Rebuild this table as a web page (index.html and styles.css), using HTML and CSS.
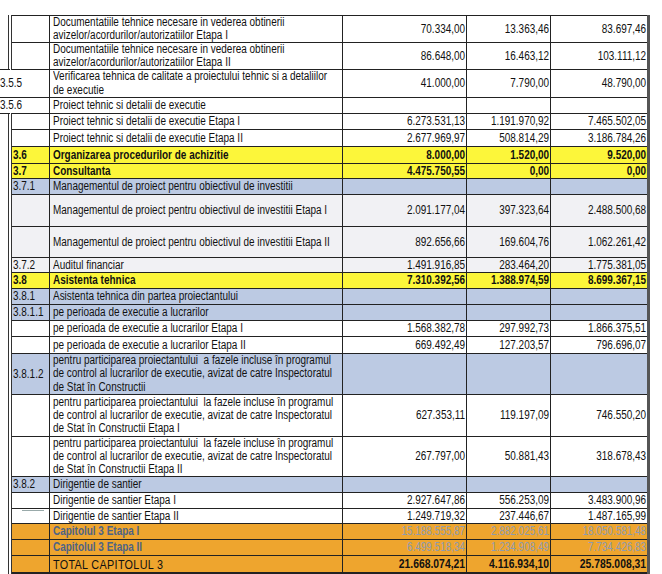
FILE: index.html
```html
<!DOCTYPE html>
<html>
<head>
<meta charset="utf-8">
<link rel="stylesheet" href="styles.css">
</head>
<body>
<div class="page">
<table class="sheet">
<colgroup><col class="c-code"><col class="c-name"><col class="c-v1"><col class="c-v2"><col class="c-v3"></colgroup>
<tbody>
<tr class="r2"><td></td><td class="name"><span class="t">Documentatiile tehnice necesare in vederea obtinerii<br>avizelor/acordurilor/autorizatiilor Etapa I</span></td><td class="num"><span class="t">70.334,00</span></td><td class="num"><span class="t">13.363,46</span></td><td class="num"><span class="t">83.697,46</span></td></tr>
<tr class="r2"><td></td><td class="name"><span class="t">Documentatiile tehnice necesare in vederea obtinerii<br>avizelor/acordurilor/autorizatiilor Etapa II</span></td><td class="num"><span class="t">86.648,00</span></td><td class="num"><span class="t">16.463,12</span></td><td class="num"><span class="t">103.111,12</span></td></tr>
<tr class="r2b"><td class="code shifted"><span class="t">3.5.5</span></td><td class="name"><span class="t">Verificarea tehnica de calitate a proiectului tehnic si a detaliilor<br>de executie</span></td><td class="num"><span class="t">41.000,00</span></td><td class="num"><span class="t">7.790,00</span></td><td class="num"><span class="t">48.790,00</span></td></tr>
<tr class="r1"><td class="code shifted"><span class="t">3.5.6</span></td><td class="name"><span class="t">Proiect tehnic si detalii de executie</span></td><td></td><td></td><td></td></tr>
<tr class="r1"><td></td><td class="name"><span class="t">Proiect tehnic si detalii de executie Etapa I</span></td><td class="num"><span class="t">6.273.531,13</span></td><td class="num"><span class="t">1.191.970,92</span></td><td class="num"><span class="t">7.465.502,05</span></td></tr>
<tr class="r1b"><td></td><td class="name"><span class="t">Proiect tehnic si detalii de executie Etapa II</span></td><td class="num"><span class="t">2.677.969,97</span></td><td class="num"><span class="t">508.814,29</span></td><td class="num"><span class="t">3.186.784,26</span></td></tr>
<tr class="r1b yellow"><td class="code"><span class="t">3.6</span></td><td class="name"><span class="t">Organizarea procedurilor de achizitie</span></td><td class="num"><span class="t">8.000,00</span></td><td class="num"><span class="t">1.520,00</span></td><td class="num"><span class="t">9.520,00</span></td></tr>
<tr class="r1s yellow"><td class="code"><span class="t">3.7</span></td><td class="name"><span class="t">Consultanta</span></td><td class="num"><span class="t">4.475.750,55</span></td><td class="num"><span class="t">0,00</span></td><td class="num"><span class="t">0,00</span></td></tr>
<tr class="r1 blue"><td class="code"><span class="t">3.7.1</span></td><td class="name"><span class="t">Managementul de proiect pentru obiectivul de investitii</span></td><td></td><td></td><td></td></tr>
<tr class="rm grey"><td></td><td class="name"><span class="t">Managementul de proiect pentru obiectivul de investitii Etapa I</span></td><td class="num"><span class="t">2.091.177,04</span></td><td class="num"><span class="t">397.323,64</span></td><td class="num"><span class="t">2.488.500,68</span></td></tr>
<tr class="rm2 grey"><td></td><td class="name"><span class="t">Managementul de proiect pentru obiectivul de investitii Etapa II</span></td><td class="num"><span class="t">892.656,66</span></td><td class="num"><span class="t">169.604,76</span></td><td class="num"><span class="t">1.062.261,42</span></td></tr>
<tr class="r1s grey"><td class="code"><span class="t">3.7.2</span></td><td class="name"><span class="t">Auditul financiar</span></td><td class="num"><span class="t">1.491.916,85</span></td><td class="num"><span class="t">283.464,20</span></td><td class="num"><span class="t">1.775.381,05</span></td></tr>
<tr class="r1 yellow"><td class="code"><span class="t">3.8</span></td><td class="name"><span class="t">Asistenta tehnica</span></td><td class="num"><span class="t">7.310.392,56</span></td><td class="num"><span class="t">1.388.974,59</span></td><td class="num"><span class="t">8.699.367,15</span></td></tr>
<tr class="r1 blue"><td class="code"><span class="t">3.8.1</span></td><td class="name"><span class="t">Asistenta tehnica din partea proiectantului</span></td><td></td><td></td><td></td></tr>
<tr class="r1 blue"><td class="code"><span class="t">3.8.1.1</span></td><td class="name"><span class="t">pe perioada de executie a lucrarilor</span></td><td></td><td></td><td></td></tr>
<tr class="r1"><td></td><td class="name"><span class="t">pe perioada de executie a lucrarilor Etapa I</span></td><td class="num"><span class="t">1.568.382,78</span></td><td class="num"><span class="t">297.992,73</span></td><td class="num"><span class="t">1.866.375,51</span></td></tr>
<tr class="r1b"><td></td><td class="name"><span class="t">pe perioada de executie a lucrarilor Etapa II</span></td><td class="num"><span class="t">669.492,49</span></td><td class="num"><span class="t">127.203,57</span></td><td class="num"><span class="t">796.696,07</span></td></tr>
<tr class="r3 blue"><td class="code"><span class="t">3.8.1.2</span></td><td class="name"><span class="t">pentru participarea proiectantului&nbsp; a fazele incluse în programul<br>de control al lucrarilor de executie, avizat de catre Inspectoratul<br>de Stat în Constructii</span></td><td></td><td></td><td></td></tr>
<tr class="r3b"><td></td><td class="name"><span class="t">pentru participarea proiectantului&nbsp; la fazele incluse în programul<br>de control al lucrarilor de executie, avizat de catre Inspectoratul<br>de Stat în Constructii Etapa I</span></td><td class="num"><span class="t">627.353,11</span></td><td class="num"><span class="t">119.197,09</span></td><td class="num"><span class="t">746.550,20</span></td></tr>
<tr class="r3s"><td></td><td class="name"><span class="t">pentru participarea proiectantului&nbsp; la fazele incluse în programul<br>de control al lucrarilor de executie, avizat de catre Inspectoratul<br>de Stat în Constructii Etapa II</span></td><td class="num"><span class="t">267.797,00</span></td><td class="num"><span class="t">50.881,43</span></td><td class="num"><span class="t">318.678,43</span></td></tr>
<tr class="r1 blue"><td class="code"><span class="t">3.8.2</span></td><td class="name"><span class="t">Dirigentie de santier</span></td><td></td><td></td><td></td></tr>
<tr class="r1"><td class="code"><span class="smudge"></span></td><td class="name"><span class="t">Dirigentie de santier Etapa I</span></td><td class="num"><span class="t">2.927.647,86</span></td><td class="num"><span class="t">556.253,09</span></td><td class="num"><span class="t">3.483.900,96</span></td></tr>
<tr class="r1s"><td></td><td class="name"><span class="t">Dirigentie de santier Etapa II</span></td><td class="num"><span class="t">1.249.719,32</span></td><td class="num"><span class="t">237.446,67</span></td><td class="num"><span class="t">1.487.165,99</span></td></tr>
<tr class="r1 orange faded"><td></td><td class="name"><span class="t">Capitolul 3 Etapa I</span></td><td class="num"><span class="t">15.188.555,87</span></td><td class="num"><span class="t">2.882.025,61</span></td><td class="num"><span class="t">18.050.581,48</span></td></tr>
<tr class="r1 orange faded"><td></td><td class="name"><span class="t">Capitolul 3 Etapa II</span></td><td class="num"><span class="t">6.499.518,34</span></td><td class="num"><span class="t">1.234.908,49</span></td><td class="num"><span class="t">7.734.426,83</span></td></tr>
<tr class="r1b orange total"><td></td><td class="name"><span class="t">TOTAL CAPITOLUL 3</span></td><td class="num"><span class="t">21.668.074,21</span></td><td class="num"><span class="t">4.116.934,10</span></td><td class="num"><span class="t">25.785.008,31</span></td></tr>
</tbody>
</table>
</div>
</body>
</html>
```
FILE: styles.css
```css
html, body {
  margin: 0;
  padding: 0;
  background: #ffffff;
}
.page {
  padding: 15px 0 0 8px;
}
.sheet {
  border-collapse: collapse;
  table-layout: fixed;
  width: 642px;
  font-family: "Liberation Sans", Arial, sans-serif;
  font-size: 12px;
  line-height: 13px;
  color: #111111;
  border-left: 4px double #333;
  border-right: 3px solid #555;
  border-top: 1px solid #222;
  border-bottom: 2px solid #222;
}
.c-code { width: 39px; }
.c-name { width: 293px; }
.c-v1 { width: 124px; }
.c-v2 { width: 84px; }
.c-v3 { width: 98px; }
.sheet td {
  border: 1px solid #222;
  padding: 0 1px 0 3px;
  vertical-align: middle;
  overflow: hidden;
  white-space: nowrap;
  background: #ffffff;
}
.sheet td.code {
  padding-left: 1px;
  position: relative;
  overflow: visible;
}
.sheet td.code.shifted {
  border-left-style: hidden;
}
.sheet td.code.shifted::before {
  content: "";
  position: absolute;
  left: -12px;
  top: -1px;
  bottom: -1px;
  width: 12px;
  border-top: 1px solid #222;
  border-bottom: 1px solid #222;
}
.sheet td.code.shifted .t {
  margin-left: -11px;
}
.sheet td.num {
  text-align: right;
  padding-right: 1px;
}
/* condensed type, as in the scanned sheet */
.t {
  display: block;
  white-space: nowrap;
  transform: scaleX(0.83);
  transform-origin: 0 50%;
}
.num .t {
  transform-origin: 100% 50%;
}
.r1 td { height: 15px; }
.r1s td { height: 14px; }
.r1b td { height: 16px; }
.r2 td { height: 26px; }
.r2b td { height: 27px; }
.rm td { height: 31px; }
.rm2 td { height: 30px; }
.r3 td { height: 40px; }
.r3b td { height: 41px; }
.r3s td { height: 39px; }
.r2b .name .t { line-height: 13.5px; }
.r3 .name .t, .r3b .name .t { line-height: 13.3px; }

.yellow td { background: #fcf63a; font-weight: bold; }
.blue td { background: #bccae3; }
.grey td { background: #f1f1f4; }
.orange td { background: #eea52e; }
.faded td.name { color: #4d6386; font-weight: bold; }
.faded td.num { color: #8d9bb0; }
.total td.name { font-size: 13px; letter-spacing: 0.4px; }
.total td.num { font-weight: bold; font-size: 12.5px; }
.smudge {
  position: absolute;
  left: 10px;
  top: 17px;
  width: 22px;
  height: 1px;
  background: #9aa;
}
```
